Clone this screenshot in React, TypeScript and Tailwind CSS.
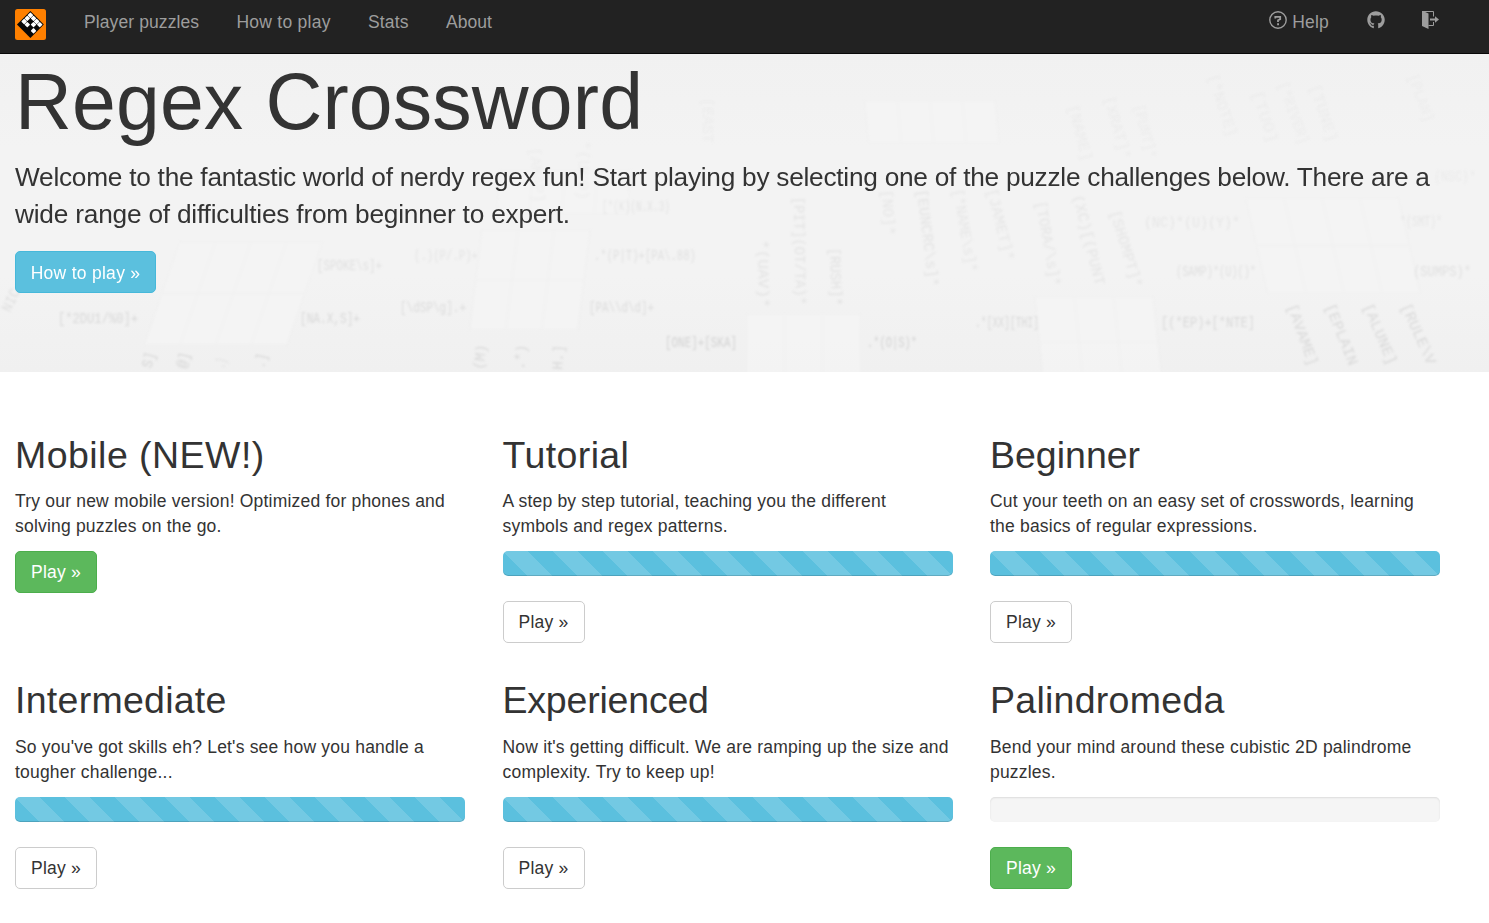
import { FaGithub } from "react-icons/fa";

const puzzles = [
  { title: "Mobile (NEW!)", tracking: "tracking-[.46px]", lines: ["Try our new mobile version! Optimized for phones and", "solving puzzles on the go."], bar: "none", green: true },
  { title: "Tutorial", tracking: "tracking-[.4px]", lines: ["A step by step tutorial, teaching you the different", "symbols and regex patterns."], bar: "full", green: false },
  { title: "Beginner", tracking: "tracking-[0px]", lines: ["Cut your teeth on an easy set of crosswords, learning", "the basics of regular expressions."], bar: "full", green: false },
  { title: "Intermediate", tracking: "tracking-[.27px]", lines: ["So you've got skills eh? Let's see how you handle a", "tougher challenge..."], bar: "full", green: false },
  { title: "Experienced", tracking: "tracking-[-.2px]", lines: ["Now it's getting difficult. We are ramping up the size and", "complexity. Try to keep up!"], bar: "full", green: false },
  { title: "Palindromeda", tracking: "tracking-[.27px]", lines: ["Bend your mind around these cubistic 2D palindrome", "puzzles."], bar: "empty", green: true },
];

// [text, x, y, rotation, opacity, width]
const clues: [string, number, number, number, number, number][] = [
  ["[*2DU1/%0]+", 58, 323, 0, 0.8, 80],
  ["[NA.X,S]+", 300, 323, 0, 0.8, 60],
  ["[SPOKE\\s]+", 317, 270, 0, 0.6, 65],
  ["[\\dSP\\g].+", 400, 312, 0, 0.7, 66],
  ["(.)(P/.P)+", 414, 260, 0, 0.45, 64],
  [".*(P|T)+[PA\\.88)", 594, 260, 0, 0.6, 102],
  ["[PA\\\\d\\d]+", 589, 312, 0, 0.7, 65],
  ["[ONE]+[SKA]", 665, 347, 0, 1, 72],
  ["[*(K)(N.X.3)", 602, 211, 0, 0.5, 68],
  [".*(O|S)*", 867, 347, 0, 1, 50],
  [".*[XX][THI]", 975, 327, 0, 0.8, 64],
  ["[(*EP)+[*NTE]", 1161, 327, 0, 0.8, 94],
  ["(NC)*(U)(Y)*", 1144, 227, 0, 0.4, 96],
  ["(SAMP)*(U)()*", 1176, 276, 0, 0.6, 80],
  ["*(SMT)*", 1400, 226, 0, 0.4, 42],
  ["(SUMPS)*", 1413, 276, 0, 0.6, 58],
  ["(NSC)*", 1434, 181, 0, 0.25, 42],
  ["*(UAV)*", 758, 240, 89, 0.5, 68],
  ["[PIT](OT/TA)*", 794, 197, 89, 0.5, 108],
  ["[RUSH]*", 830, 248, 88, 0.55, 58],
  ["[NO]*", 882, 190, 86, 0.4, 46],
  ["[EUNCRC\\s]*", 917, 190, 83, 0.5, 98],
  ["[*NAME\\s]*", 953, 190, 80, 0.4, 84],
  ["[JAMET]*", 987, 190, 76, 0.4, 74],
  ["[TORA/\\s]*", 1036, 202, 80, 0.45, 86],
  ["(XC)[(PUNT", 1073, 196, 76, 0.45, 93],
  ["[SHOMPT]*", 1110, 212, 73, 0.45, 80],
  ["[NAME]", 1068, 106, 75, 0.22, 58],
  ["[XRAT]*", 1104, 98, 74, 0.22, 65],
  ["[PUNT]*", 1134, 106, 76, 0.2, 55],
  ["[*NOTE]", 1208, 76, 72, 0.2, 65],
  ["[TUO]", 1252, 92, 72, 0.2, 55],
  ["[*RIVER]", 1278, 84, 70, 0.2, 65],
  ["[TUNE]", 1310, 86, 72, 0.2, 60],
  ["[PLAN]", 1408, 76, 70, 0.18, 50],
  ["[AMAP]", 530, 148, 85, 0.2, 55],
  ["*(UNO)", 580, 140, 92, 0.2, 60],
  ["[EAST", 703, 98, 90, 0.18, 45],
  ["[AVAME]", 1287, 306, 70, 0.8, 65],
  ["[EPLAIN", 1325, 306, 68, 0.8, 65],
  ["[ALUNE]", 1363, 306, 67, 0.8, 65],
  ["[RULE\\V", 1401, 306, 66, 0.8, 65],
  ["S]", 151, 369, -74, 0.9, 16],
  ["@]", 186, 369, -76, 0.9, 16],
  [".)", 224, 369, -76, 0.6, 10],
  [".]", 264, 369, -78, 0.8, 15],
  ["(M)", 483, 370, -82, 0.8, 25],
  [".*)", 524, 370, -84, 0.8, 25],
  ["H.]", 562, 370, -86, 0.8, 25],
  ["NIC", 10, 313, -65, 0.6, 24],
];

// [x, y, width, height, skew, columns, rows]
const grids: [number, number, number, number, number, number, number][] = [
  [180, 242, 142, 103, -19, 4, 2],
  [482, 230, 108, 100, -7, 3, 2],
  [747, 314, 113, 70, 0, 3, 1],
  [1035, 297, 118, 90, 6, 3, 2],
  [1246, 198, 152, 95, 13, 4, 2],
  [865, 101, 130, 42, 5, 4, 1],
  [500, 170, 130, 44, -4, 4, 1],
];

function HeroPattern() {
  return (
    <svg aria-hidden="true" viewBox="0 54 1489 318" className="absolute inset-0 h-full w-full" preserveAspectRatio="none">
      <defs>
        <linearGradient id="haze" x1="0" x2="0" y1="0" y2="1">
          <stop offset="0" stopColor="#f1f1f1" />
          <stop offset=".3" stopColor="#f3f3f3" />
          <stop offset=".7" stopColor="#f3f3f3" />
          <stop offset="1" stopColor="#f0f0f0" />
        </linearGradient>
        <filter id="soft"><feGaussianBlur stdDeviation=".8" /></filter>
      </defs>
      <rect y="54" width="1489" height="318" fill="url(#haze)" />
      <g filter="url(#soft)">
        {grids.map(([x, y, w, h, skew, cols, rows], i) => (
          <g key={i} transform={`translate(${x} ${y}) skewX(${skew})`} opacity=".75">
            <rect width={w} height={h} fill="#f5f5f5" />
            {Array.from({ length: cols + 1 }, (_, c) => (
              <path key={`c${c}`} d={`M${(c * w) / cols} 0V${h}`} stroke="#f0f0f0" />
            ))}
            {Array.from({ length: rows + 1 }, (_, r) => (
              <path key={`r${r}`} d={`M0 ${(r * h) / rows}H${w}`} stroke="#efefef" />
            ))}
          </g>
        ))}
        {clues.map(([text, x, y, angle, opacity, width], i) => (
          <text key={i} transform={`translate(${x} ${y}) rotate(${angle})`} textLength={width} lengthAdjust="spacingAndGlyphs" fontSize="15" fill="#d3d3d3" opacity={opacity} className="font-['Liberation_Mono',monospace]">
            {text}
          </text>
        ))}
      </g>
    </svg>
  );
}

function Logo() {
  const cells = ["1111", "1010", "1101", "0000"];
  return (
    <svg viewBox="0 0 31 31" className="h-[31px] w-[31px]">
      <rect width="31" height="31" rx="2.5" fill="#ff8000" />
      <g transform="translate(15.4 2.1) rotate(45)">
        <rect width="19" height="19" fill="#080808" />
        {cells.flatMap((row, r) =>
          row.split("").map((v, c) => v === "1" && <rect key={`${r}${c}`} x={0.9 + c * 4.4} y={0.9 + r * 4.4} width="4.1" height="4.1" rx=".6" fill="#fff" />),
        )}
      </g>
    </svg>
  );
}

function Play({ green }: { green: boolean }) {
  return (
    <button className={`block h-[42px] w-[82px] rounded-[5px] border pt-px text-center text-[17.5px] leading-[25px] tracking-[.2px] ${green ? "border-[#4cae4c] bg-[#5cb85c] text-white" : "border-[#ccc] bg-white text-[#333]"}`}>
      Play »
    </button>
  );
}

export default function App() {
  return (
    <div className="h-[923px] w-full overflow-hidden bg-white font-['Liberation_Sans',Arial,sans-serif] text-[17.5px] leading-[25px] text-[#333]">
      <nav className="flex h-[54px] items-start border-b border-[#080808] bg-[#222] pl-[15px] text-[#9d9d9d]">
        <div className="mt-[9px]"><Logo /></div>
        <div className="ml-[38px] flex gap-[37.25px] pt-[10px]">
          <a className="tracking-[.1px]">Player puzzles</a>
          <a className="tracking-[.25px]">How to play</a>
          <a className="tracking-[.2px]">Stats</a>
          <a>About</a>
        </div>
        <div className="mr-[50px] ml-auto flex">
          <a className="flex pt-[10px]">
            <svg viewBox="0 0 18 18" className="mt-px mr-[5px] h-[18px] w-[18px]" fill="none" stroke="currentColor">
              <circle cx="9" cy="9" r="8.2" strokeWidth="1.4" />
              <path d="M6.3 7.4V5.9H11.2V8.2L9 9.3V11" strokeWidth="1.8" />
              <path d="M8.1 13.2H10" strokeWidth="1.9" />
            </svg>
            <span className="tracking-[.2px]">Help</span>
          </a>
          <FaGithub className="mt-[11px] ml-[38px] h-[18px] w-[18px]" />
          <svg viewBox="0 0 18 18" className="mt-[11px] ml-[36px] h-[18px] w-[18px]" fill="none" stroke="currentColor">
            <path d="M1 0H2L7.5 2.5V18L1 15Z" fill="currentColor" stroke="none" />
            <path d="M1 .5H12.5V5.5M12.5 11V14.5H7.5" strokeWidth="1" />
            <path d="M9 8.5H15" strokeWidth="2" />
            <path d="M14 5.2L18 8.5L14 11.8Z" fill="currentColor" stroke="none" />
          </svg>
        </div>
      </nav>

      <header className="relative h-[318px] bg-[#f2f2f2]">
        <HeroPattern />
        <div className="relative pt-[8px] pl-[15px]">
          <h1 className="text-[78.75px] leading-[80px] tracking-[.15px]">Regex Crossword</h1>
          <p className="mt-[17px] text-[26.25px] leading-[36.75px] whitespace-nowrap">
            <span className="tracking-[-.255px]">
              Welcome to the fantastic world of nerdy regex fun! Start playing by selecting one of the puzzle challenges below. There are a
            </span>
            <br />
            <span className="tracking-[-.21px]">wide range of difficulties from beginner to expert.</span>
          </p>
          <button className="mt-[18.5px] block h-[42px] w-[141px] rounded-[5px] border border-[#46b8da] bg-[#5bc0de] pt-[2px] text-center tracking-[.28px] text-white">How to play »</button>
        </div>
      </header>

      <main className="grid grid-cols-[450px_450px_450px] gap-x-[37.5px] pt-[62.5px] pl-[15px]">
        {puzzles.map(({ title, tracking, lines, bar, green }) => (
          <section key={title} className="h-[245.75px]">
            <h2 className={`text-[37.5px] leading-[41.25px] ${tracking}`}>{title}</h2>
            <p className="mt-[13.5px] mb-[11.5px] tracking-[.2px] whitespace-nowrap">
              {lines[0]}
              <br />
              {lines[1]}
            </p>
            {bar === "full" && (
              <div className="mb-[25px] h-[25px] rounded-[5px] bg-[#5bc0de] bg-[linear-gradient(45deg,rgba(255,255,255,.15)_25%,transparent_25%,transparent_50%,rgba(255,255,255,.15)_50%,rgba(255,255,255,.15)_75%,transparent_75%,transparent)] bg-[length:50px_50px] shadow-[inset_0_-1px_0_rgba(0,0,0,.15)]" />
            )}
            {bar === "empty" && <div className="mb-[25px] h-[25px] rounded-[5px] bg-[#f5f5f5] shadow-[inset_0_1px_2px_rgba(0,0,0,.1)]" />}
            <Play green={green} />
          </section>
        ))}
      </main>
    </div>
  );
}
